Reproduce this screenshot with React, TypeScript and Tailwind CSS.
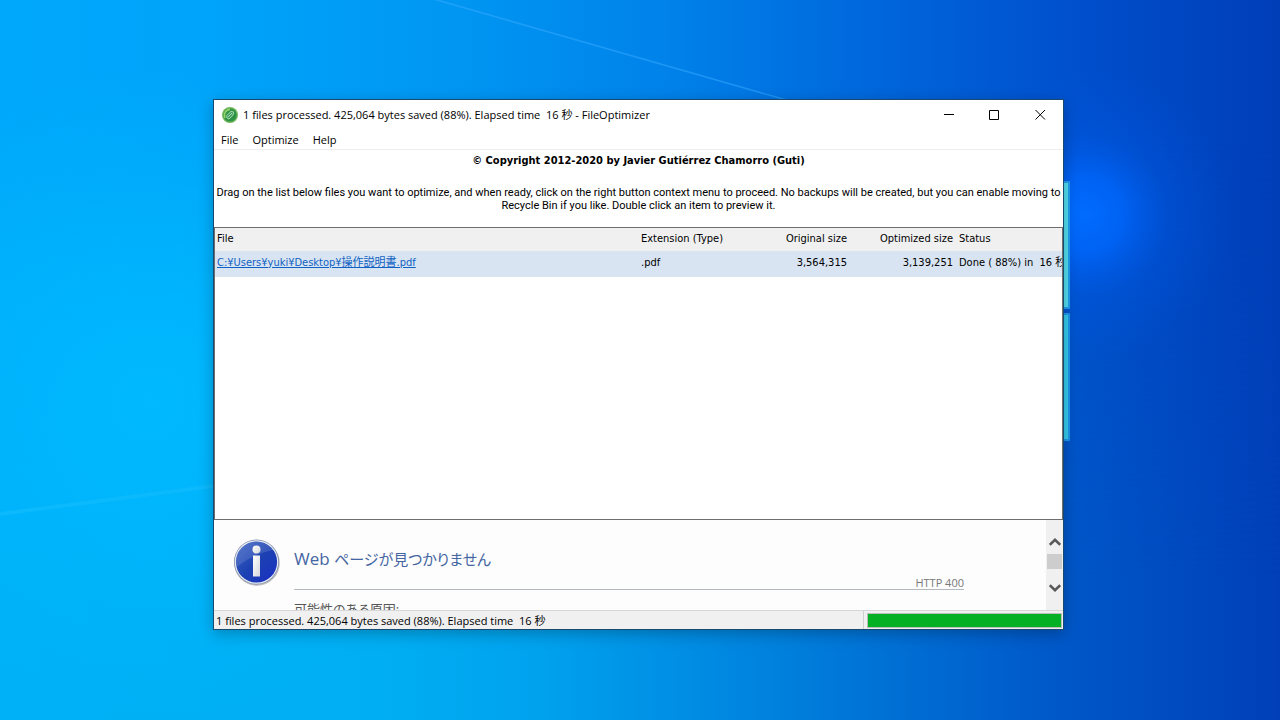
import React from "react";

const ui = "font-['Open_Sans','Noto_Sans_CJK_JP',sans-serif]";
const SUMMARY = "1 files processed. 425,064 bytes saved (88%). Elapsed time \u00a016 秒";

function Wallpaper() {
  return (
    <svg
      className="absolute inset-0 h-full w-full"
      viewBox="0 0 1280 720"
      preserveAspectRatio="none"
      aria-hidden="true"
    >
      <defs>
        <linearGradient id="base" x1="0" y1="0" x2="1" y2="0">
          <stop offset="0" stopColor="#00a8fb" />
          <stop offset="0.16" stopColor="#00a4fa" />
          <stop offset="0.36" stopColor="#0096f2" />
          <stop offset="0.52" stopColor="#0082ea" />
          <stop offset="0.7" stopColor="#0064da" />
          <stop offset="0.85" stopColor="#004ecb" />
          <stop offset="1" stopColor="#003eb8" />
        </linearGradient>
        <linearGradient id="low" x1="0" y1="0" x2="1" y2="0">
          <stop offset="0" stopColor="#00b1f7" />
          <stop offset="0.3" stopColor="#00aef3" />
          <stop offset="0.42" stopColor="#00a2ee" />
          <stop offset="0.6" stopColor="#0082de" />
          <stop offset="0.8" stopColor="#005ccb" />
          <stop offset="1" stopColor="#003fb8" />
        </linearGradient>
        <linearGradient id="fade" x1="0" y1="0" x2="0" y2="1">
          <stop offset="0.2" stopColor="#000" />
          <stop offset="0.8" stopColor="#fff" />
        </linearGradient>
        <mask id="lowMask">
          <rect width="1280" height="720" fill="url(#fade)" />
        </mask>
        <radialGradient id="left" gradientUnits="userSpaceOnUse" cx="150" cy="400" r="330">
          <stop offset="0" stopColor="#00b9ff" />
          <stop offset="1" stopColor="#00b9ff" stopOpacity="0" />
        </radialGradient>
        <radialGradient id="glow" gradientUnits="userSpaceOnUse" cx="1085" cy="215" r="150">
          <stop offset="0" stopColor="#006cff" />
          <stop offset="0.25" stopColor="#0066fb" stopOpacity="0.85" />
          <stop offset="0.55" stopColor="#005ae6" stopOpacity="0.35" />
          <stop offset="1" stopColor="#0055e0" stopOpacity="0" />
        </radialGradient>
      </defs>
      <rect width="1280" height="720" fill="url(#base)" />
      <rect width="1280" height="720" fill="url(#low)" mask="url(#lowMask)" />
      <rect width="1280" height="720" fill="url(#left)" />
      <rect width="1280" height="720" fill="url(#glow)" />
      <path d="M434 0 H440 L786 99 H780Z" fill="#38acff" opacity="0.5" />
      <path d="M0 512 L214 484 V488 L0 516Z" fill="#2cc6ff" opacity="0.25" />
      <rect x="1060" y="181" width="10" height="128" rx="1" fill="#1f9ff0" />
      <rect x="1060" y="183" width="8" height="124" fill="#52dff0" />
      <rect x="1060" y="313" width="10" height="128" rx="1" fill="#1b98ec" />
      <rect x="1060" y="315" width="8" height="124" fill="#34cbee" />
    </svg>
  );
}

function AppIcon() {
  return (
    <svg className="h-4 w-4" viewBox="0 0 16 16" aria-hidden="true">
      <circle cx="8" cy="8" r="8" fill="#6fb85a" />
      <circle cx="8" cy="8" r="6.6" fill="#2f9145" />
      <path d="M3 11 A6 6 0 0 1 8 2.4" fill="none" stroke="#95d36c" strokeWidth="1.6" />
      <path d="M4.8 8.6 L9 4.2 L11.6 5 L11.2 8 L7 12 L5 11Z" fill="#3d9c60" stroke="#a9dcab" strokeWidth="1" />
      <path d="M6.4 9.8 L10 6" stroke="#b7e4c0" strokeWidth="1" />
    </svg>
  );
}

function InfoIcon() {
  return (
    <svg className="h-12 w-12 shrink-0" viewBox="0 0 48 48" aria-hidden="true">
      <defs>
        <linearGradient id="ball" x1="0" y1="0" x2="1" y2="1">
          <stop offset="0" stopColor="#3f66c4" />
          <stop offset="0.5" stopColor="#1c41b2" />
          <stop offset="1" stopColor="#1a2fc4" />
        </linearGradient>
        <linearGradient id="stem" x1="0" y1="0" x2="1" y2="1">
          <stop offset="0" stopColor="#ffffff" />
          <stop offset="1" stopColor="#d4d6dc" />
        </linearGradient>
      </defs>
      <circle cx="24" cy="25" r="22.8" fill="#000" opacity="0.25" />
      <circle cx="23.5" cy="24" r="22.5" fill="#7d8bab" />
      <circle cx="23.5" cy="24" r="21.8" fill="#e6eaf2" />
      <circle cx="23.5" cy="24" r="20.6" fill="url(#ball)" />
      <path d="M3 26 A20.6 20.6 0 0 1 40 12 Q20 16 3.5 29Z" fill="#fff" opacity="0.12" />
      <circle cx="23.5" cy="11.5" r="4" fill="url(#stem)" />
      <path d="M20 17.5 H27 V38.5 H20Z" fill="url(#stem)" />
    </svg>
  );
}

function Chevron({ down = false }: { down?: boolean }) {
  return (
    <svg className="h-2 w-3" viewBox="0 0 12 8" aria-hidden="true">
      <path
        d={down ? "M0.8 1.2 L6 6.2 L11.2 1.2" : "M0.8 6.8 L6 1.8 L11.2 6.8"}
        fill="none"
        stroke="#5a5a5a"
        strokeWidth="2.6"
      />
    </svg>
  );
}

function TitleBar() {
  const button = "flex h-[30px] w-[46px] items-center justify-center hover:bg-[#e5e5e5]";
  return (
    <header className="flex h-[30px] items-center">
      <div className="flex min-w-0 flex-1 items-center gap-[5px] pl-2">
        <AppIcon />
        <h1 className="truncate text-[11px] leading-4">{SUMMARY} - FileOptimizer</h1>
      </div>
      <button type="button" aria-label="Minimize" className={button}>
        <svg className="h-[11px] w-[11px]" viewBox="0 0 11 11">
          <path d="M1 4.5 H11" stroke="#000" />
        </svg>
      </button>
      <button type="button" aria-label="Maximize" className={button}>
        <svg className="h-[11px] w-[11px]" viewBox="0 0 11 11">
          <path d="M0.5 0.5 H9.5 V9.5 H0.5Z" fill="none" stroke="#000" />
        </svg>
      </button>
      <button type="button" aria-label="Close" className={button}>
        <svg className="h-[11px] w-[11px]" viewBox="0 0 11 11">
          <path d="M0.5 0 L10 9.5 M10 0 L0.5 9.5" stroke="#000" strokeWidth="1" />
        </svg>
      </button>
    </header>
  );
}

function FileList() {
  return (
    <section className="flex-1 border border-[#6e6e6e] bg-white text-[11px] leading-[13px]">
      <table className="w-full table-fixed border-collapse whitespace-nowrap">
        <colgroup>
          <col />
          <col className="w-[118px]" />
          <col className="w-[92px]" />
          <col className="w-[106px]" />
          <col className="w-[107px]" />
        </colgroup>
        <thead>
          <tr className="h-[23px] bg-[#f0f0f0] text-left">
            <th className="pb-[2px] pl-[2px] font-normal">File</th>
            <th className="pb-[2px] pl-[2px] font-normal">Extension (Type)</th>
            <th className="pr-[2px] pb-[2px] text-right font-normal">Original size</th>
            <th className="pr-[2px] pb-[2px] text-right font-normal">Optimized size</th>
            <th className="pb-[2px] pl-1 font-normal">Status</th>
          </tr>
        </thead>
        <tbody>
          <tr className="h-[26px] bg-[#d8e4f1]">
            <td className="pb-1 pl-[2px]">
              <a href="#preview" className="text-[#0f62c4] underline">
                C:¥Users¥yuki¥Desktop¥操作説明書.pdf
              </a>
            </td>
            <td className="pb-1 pl-[2px]">.pdf</td>
            <td className="pr-[2px] pb-1 text-right">3,564,315</td>
            <td className="pr-[2px] pb-1 text-right">3,139,251</td>
            <td className="overflow-hidden pb-1 pl-1">Done ( 88%) in &nbsp;16 秒</td>
          </tr>
        </tbody>
      </table>
    </section>
  );
}

function Preview() {
  return (
    <section className={`flex h-[90px] overflow-hidden bg-[#fdfdfd] [font-feature-settings:'palt'] ${ui}`}>
      <div className="flex min-w-0 flex-1 gap-[13px] pt-[18px] pr-[82px] pl-[19px]">
        <InfoIcon />
        <div className="min-w-0 flex-1">
          <h2 className="h-[33px] pt-[9px] text-[17px] leading-6 text-[#4465a2]">
            Web <span className="text-[15px]">ページが見つかりません</span>
          </h2>
          <p className="mt-[5px] border-b border-[#b4b8bf] text-right text-[11px] leading-[13px] text-[#787878]">
            HTTP 400
          </p>
          <p className="pt-[9px] text-[13px] leading-5 text-[#575757]">可能性のある原因:</p>
        </div>
      </div>
      <div className="flex w-[17px] flex-col items-center bg-[#f0f0f0] pt-[13px]">
        <button type="button" aria-label="Scroll up" className="flex h-[21px] w-full items-center justify-center pb-1">
          <Chevron />
        </button>
        <div className="h-[15px] w-[15px] bg-[#cdcdcd]" />
        <button type="button" aria-label="Scroll down" className="flex h-[38px] w-full items-center justify-center">
          <Chevron down />
        </button>
      </div>
    </section>
  );
}

export default function App() {
  return (
    <div className="relative flex min-h-screen overflow-hidden pt-[99px] pr-[216px] pb-[90px] pl-[213px]">
      <Wallpaper />
      <main className="relative flex min-w-0 flex-1 flex-col border border-[#174a70] bg-white font-['DejaVu_Sans_Condensed','Noto_Sans_CJK_JP',sans-serif] text-black shadow-[0_4px_14px_rgba(0,0,0,0.25)]">
        <div className={ui}>
          <TitleBar />
          <nav className="flex h-5 items-center gap-[14px] border-b border-[#ededed] pl-[7px] text-[11px] leading-4">
            <button type="button">File</button>
            <button type="button">Optimize</button>
            <button type="button">Help</button>
          </nav>
        </div>
        <div className="h-[77px] px-[2px] pt-[4px] text-center text-[11px] leading-[13px]">
          <p className="font-bold">© Copyright 2012-2020 by Javier Gutiérrez Chamorro (Guti)</p>
          <p className="mt-[19px] font-['Roboto',sans-serif]">
            Drag on the list below files you want to optimize, and when ready, click on the right button context menu to
            proceed. No backups will be created, but you can enable moving to Recycle Bin if you like. Double click an
            item to preview it.
          </p>
        </div>
        <FileList />
        <Preview />
        <footer className={`flex h-[19px] border-t border-[#d7d7d7] bg-[#f0f0f0] ${ui}`}>
          <p className="flex-1 truncate pl-[2px] text-[11px] leading-[19px]">{SUMMARY}</p>
          <div className="w-[200px] border-l border-[#d0d0d0] pt-[2px] pr-px pl-[3px]">
            <div
              role="progressbar"
              aria-label="Progress"
              aria-valuenow={100}
              className="h-[15px] border border-[#bcbcbc] bg-[#06b025]"
            />
          </div>
        </footer>
      </main>
    </div>
  );
}
